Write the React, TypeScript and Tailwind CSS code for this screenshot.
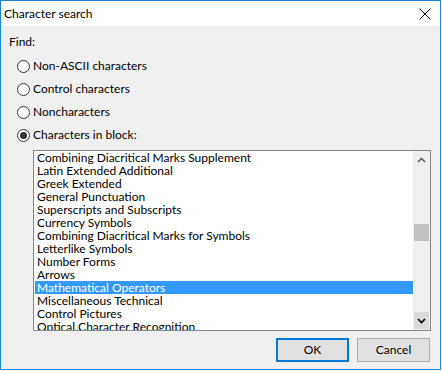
import React from "react";

const items = [
  "Combining Diacritical Marks Supplement",
  "Latin Extended Additional",
  "Greek Extended",
  "General Punctuation",
  "Superscripts and Subscripts",
  "Currency Symbols",
  "Combining Diacritical Marks for Symbols",
  "Letterlike Symbols",
  "Number Forms",
  "Arrows",
  "Mathematical Operators",
  "Miscellaneous Technical",
  "Control Pictures",
  "Optical Character Recognition",
];

const options = [
  { label: "Non-ASCII characters", checked: false },
  { label: "Control characters", checked: false },
  { label: "Noncharacters", checked: false },
  { label: "Characters in block:", checked: true },
];

function Radio({ checked }: { checked: boolean }) {
  return (
    <span className="w-[13px] h-[13px] rounded-full border border-[#333333] bg-white flex items-center justify-center shrink-0">
      {checked && <span className="w-[7px] h-[7px] rounded-full bg-[#333333]" />}
    </span>
  );
}

export default function App() {
  return (
    <div
      className="w-[442px] h-[371px] bg-white text-[12px] text-black"
      style={{ fontFamily: 'Lato, "Noto Sans", sans-serif' }}
    >
      <div className="w-[441px] h-[370px] border border-[#1883d7] flex flex-col">
        {/* Title bar */}
        <div className="h-[25px] bg-white flex items-center justify-between pl-[3px] pr-[8px]">
          <span className="leading-none">Character search</span>
          <svg width="12" height="12" viewBox="0 0 12 12" className="mr-[1px]">
            <path d="M0.5 0.5 L11.5 11.5 M11.5 0.5 L0.5 11.5" stroke="#000" strokeWidth="1" />
          </svg>
        </div>

        {/* Body */}
        <div className="flex-1 bg-[#f0f0f0] flex flex-col">
          <div className="pl-[8px] pt-[8px] h-[16px] leading-[16px] box-content">Find:</div>

          <div className="flex flex-col gap-[7px] pl-[16px] mt-[8px]">
            {options.map((o) => (
              <div key={o.label} className="h-[16px] flex items-center gap-[3px]">
                <Radio checked={o.checked} />
                <span className="leading-[16px]">{o.label}</span>
              </div>
            ))}
          </div>

          {/* List box */}
          <div className="ml-[32px] mt-[7px] w-[398px] h-[181px] border border-[#828790] bg-white flex">
            <div className="flex-1 flex flex-col overflow-hidden pl-[1px]">
              {items.map((it) => {
                const sel = it === "Mathematical Operators";
                return (
                  <div
                    key={it}
                    className={`h-[13px] shrink-0 leading-[13px] pl-[2px] whitespace-nowrap ${
                      sel ? "bg-[#3399ff] text-white" : ""
                    }`}
                  >
                    {it}
                  </div>
                );
              })}
            </div>
            {/* Scrollbar */}
            <div className="w-[17px] bg-[#f0f0f0] flex flex-col">
              <div className="h-[17px] flex items-center justify-center">
                <svg width="9" height="6" viewBox="0 0 9 6">
                  <path d="M1 5 L4.5 1.5 L8 5" stroke="#606060" strokeWidth="1.6" fill="none" />
                </svg>
              </div>
              <div className="flex-1 flex flex-col px-[1px]">
                <div className="h-[56px]" />
                <div className="h-[17px] bg-[#c1c1c1]" />
              </div>
              <div className="h-[17px] bg-[#dadada] flex items-center justify-center mx-[1px] mb-[1px]">
                <svg width="9" height="6" viewBox="0 0 9 6">
                  <path d="M1 1 L4.5 4.5 L8 1" stroke="#000" strokeWidth="1.6" fill="none" />
                </svg>
              </div>
            </div>
          </div>

          {/* Buttons */}
          <div className="flex justify-end gap-[8px] pr-[10px] mt-[7px]">
            <button className="w-[73px] h-[24px] bg-[#e1e1e1] border-2 border-[#0078d7] leading-none">
              OK
            </button>
            <button className="w-[73px] h-[24px] bg-[#e1e1e1] border border-[#adadad] leading-none">
              Cancel
            </button>
          </div>
        </div>
      </div>
    </div>
  );
}
